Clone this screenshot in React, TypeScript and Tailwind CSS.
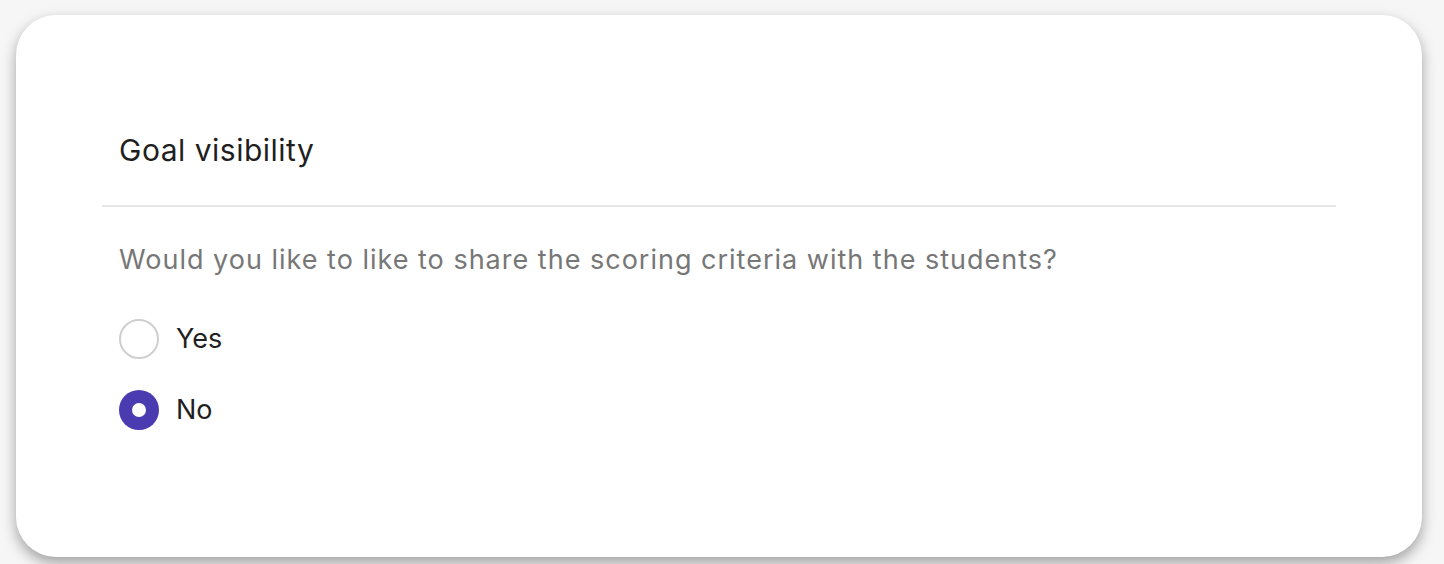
import { useState } from "react";

const options = ["Yes", "No"];

const App = () => {
  const [choice, setChoice] = useState("No");

  return (
    <div className="min-h-screen bg-[#f6f6f6] pt-[15px] pl-[16px] pr-[22px] pb-[7px] font-['Inter',sans-serif]">
      <div className="h-[542px] bg-white rounded-[40px] shadow-[0_6px_14px_rgba(0,0,0,0.35)] px-[86px] pt-[115px]">
        <h2 className="pl-[17px] text-[30px] leading-[40px] tracking-[0.5px] text-[#1f1f1f] font-normal">
          Goal visibility
        </h2>
        <div className="mt-[35px] border-t-2 border-[#e6e6e6]" />
        <div className="pl-[17px] pt-[33px]">
          <p className="text-[27px] leading-[40px] tracking-[1px] text-[#777777]">
            Would you like to like to share the scoring criteria with the students?
          </p>
          <div className="mt-[39px] flex flex-col gap-[31px]">
            {options.map((opt) => {
              const active = choice === opt;
              return (
                <label
                  key={opt}
                  onClick={() => setChoice(opt)}
                  className="flex items-center gap-[17px] cursor-pointer"
                >
                  {active ? (
                    <span className="w-[40px] h-[40px] rounded-full bg-[#4a3bb0] flex items-center justify-center">
                      <span className="w-[14px] h-[14px] rounded-full bg-white" />
                    </span>
                  ) : (
                    <span className="w-[40px] h-[40px] rounded-full border-2 border-[#cfcfcf] bg-white" />
                  )}
                  <span className="text-[27px] leading-[40px] text-[#1f1f1f]">{opt}</span>
                </label>
              );
            })}
          </div>
        </div>
      </div>
    </div>
  );
};

export default App;
